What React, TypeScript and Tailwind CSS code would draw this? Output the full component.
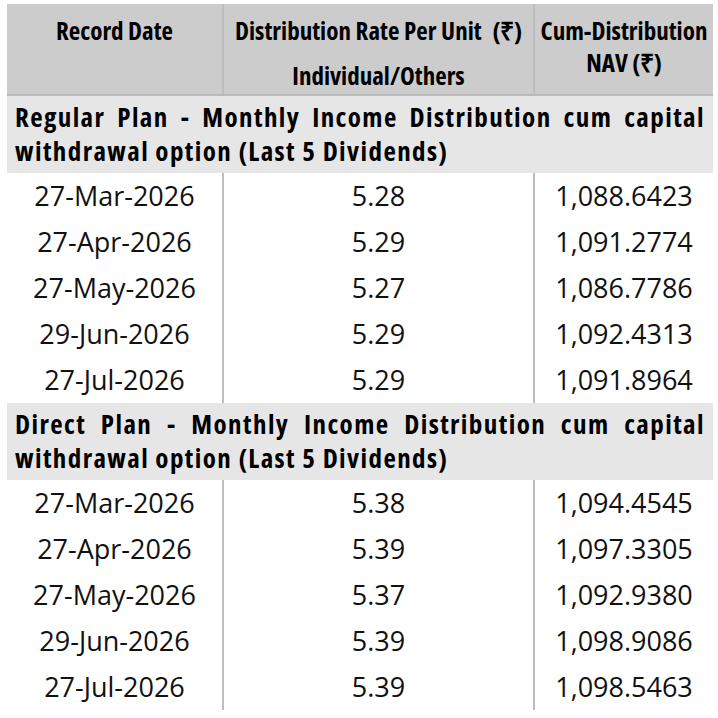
import React from "react";

const regular = [
  ["27-Mar-2026", "5.28", "1,088.6423"],
  ["27-Apr-2026", "5.29", "1,091.2774"],
  ["27-May-2026", "5.27", "1,086.7786"],
  ["29-Jun-2026", "5.29", "1,092.4313"],
  ["27-Jul-2026", "5.29", "1,091.8964"],
];
const direct = [
  ["27-Mar-2026", "5.38", "1,094.4545"],
  ["27-Apr-2026", "5.39", "1,097.3305"],
  ["27-May-2026", "5.37", "1,092.9380"],
  ["29-Jun-2026", "5.39", "1,098.9086"],
  ["27-Jul-2026", "5.39", "1,098.5463"],
];

function Section({ title }: { title: string }) {
  return (
    <div className="bg-[#e6e6e6] px-[8px] pt-[4px] pb-[5px] text-[27px] leading-[34px] tracking-[1.4px] font-bold text-black text-justify font-['Open_Sans',sans-serif] [font-stretch:75%]">
      {title}
    </div>
  );
}

function Rows({ rows }: { rows: string[][] }) {
  return (
    <div>
      {rows.map((r, i) => (
        <div key={i} className="flex h-[46px] text-[27px] leading-[46px] text-[#111] font-['Open_Sans',sans-serif]">
          <div className="w-[217px] border-r-2 border-[#bdbdbd] text-center">{r[0]}</div>
          <div className="w-[311px] border-r-2 border-[#bdbdbd] text-center">{r[1]}</div>
          <div className="flex-1 text-center">{r[2]}</div>
        </div>
      ))}
    </div>
  );
}

export default function App() {
  return (
    <div className="w-[718px] h-[718px] bg-white pt-[4px] pl-[7px] pr-[5px]">
      <div className="flex bg-[#cccccc] h-[92px] border-b-2 border-[#bbbbbb] font-bold text-black font-['Open_Sans',sans-serif] [font-stretch:75%]">
        <div className="w-[217px] border-r-2 border-[#bdbdbd] text-center text-[25px] leading-[30px] pt-[11px]">
          Record Date
        </div>
        <div className="w-[311px] border-r-2 border-[#bdbdbd] px-[11px] text-[25px] leading-[30px] pt-[11px]">
          <div className="flex justify-between">
            <span>Distribution</span>
            <span>Rate</span>
            <span>Per</span>
            <span>Unit</span>
            <span className="ml-[6px]">(₹)</span>
          </div>
          <div className="text-center mt-[15px]">Individual/Others</div>
        </div>
        <div className="flex-1 text-center text-[25px] leading-[32px] pt-[10px]">
          <div>Cum-Distribution</div>
          <div>NAV (₹)</div>
        </div>
      </div>
      <Section title="Regular Plan - Monthly Income Distribution cum capital withdrawal option (Last 5 Dividends)" />
      <Rows rows={regular} />
      <Section title="Direct Plan - Monthly Income Distribution cum capital withdrawal option (Last 5 Dividends)" />
      <Rows rows={direct} />
    </div>
  );
}
